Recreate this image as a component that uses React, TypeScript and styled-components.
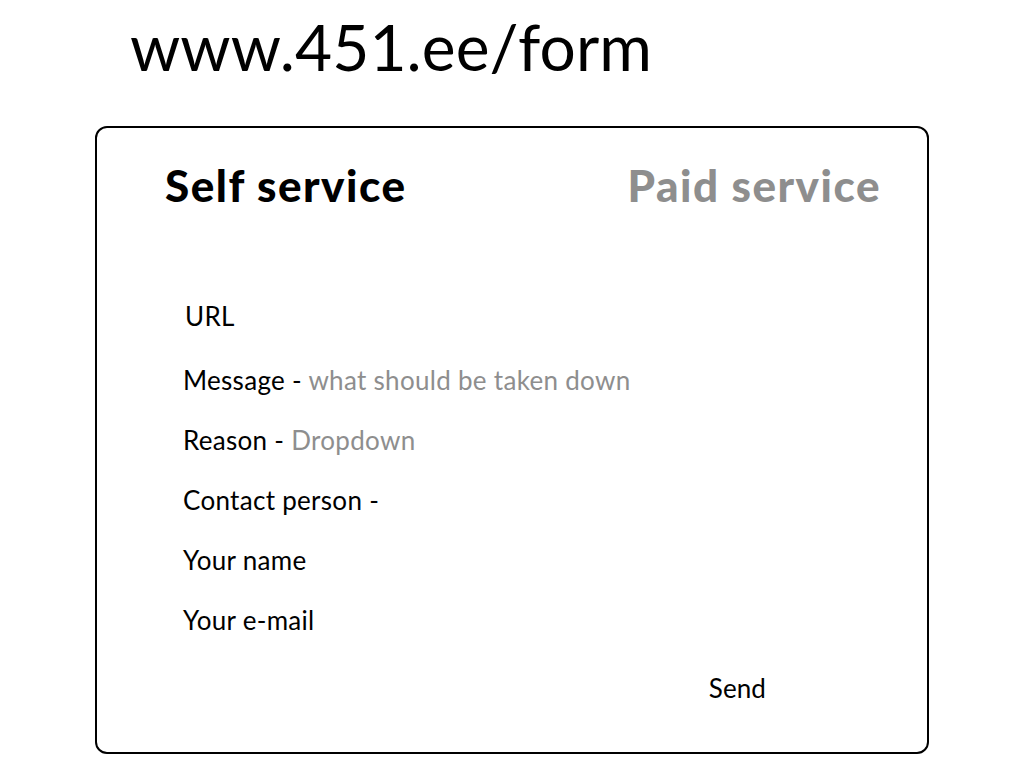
import React from "react";
import styled, { createGlobalStyle } from "styled-components";

const Global = createGlobalStyle`
  html, body { margin: 0; padding: 0; background: #fff; }
  body { font-family: Lato, "Open Sans", sans-serif; color: #000; }
`;

const Page = styled.div`
  width: 1024px;
  height: 768px;
  display: flex;
  flex-direction: column;
  box-sizing: border-box;
`;

const Title = styled.h1`
  margin: 0;
  padding: 7px 0 0 130px;
  height: 126px;
  flex-shrink: 0;
  box-sizing: border-box;
  font-family: Lato, sans-serif;
  font-weight: 400;
  font-size: 64px;
  line-height: 80px;
  letter-spacing: 0.1px;
`;

const Card = styled.section`
  margin-left: 95px;
  width: 834px;
  height: 628px;
  flex-shrink: 0;
  box-sizing: border-box;
  border: 2px solid #000;
  border-radius: 12px;
  display: flex;
  flex-direction: column;
`;

const Tabs = styled.div`
  display: flex;
  justify-content: space-between;
  align-items: baseline;
  padding: 33px 46px 0 68px;
  height: 172px;
  box-sizing: border-box;
`;

const Tab = styled.div<{ $active?: boolean }>`
  font-family: Lato, sans-serif;
  font-weight: 900;
  font-size: 44px;
  line-height: 48px;
  letter-spacing: 1.5px;
  color: ${(p) => (p.$active ? "#000" : "#8e8e8e")};
`;

const Form = styled.div`
  display: flex;
  flex-direction: column;
  padding-left: 86px;
`;

const Row = styled.div<{ $h: number; $indent?: number }>`
  height: ${(p) => p.$h}px;
  padding-left: ${(p) => p.$indent ?? 0}px;
  font-size: 26px;
  line-height: 32px;
  letter-spacing: 0.3px;
  color: #000;
`;

const Hint = styled.span`
  color: #8e8e8e;
`;

const Actions = styled.div`
  display: flex;
  justify-content: flex-end;
  padding-right: 161px;
  padding-top: 8px;
`;

const Send = styled.button`
  font-family: Lato, sans-serif;
  font-size: 26px;
  line-height: 32px;
  letter-spacing: 0.1px;
  background: none;
  border: none;
  padding: 0;
  color: #000;
`;

export default function App() {
  return (
    <>
      <Global />
      <Page>
        <Title>www.451.ee/form</Title>
        <Card>
          <Tabs>
            <Tab $active>Self service</Tab>
            <Tab>Paid service</Tab>
          </Tabs>
          <Form>
            <Row $h={64} $indent={2}>URL</Row>
            <Row $h={60}>
              Message - <Hint>what should be taken down</Hint>
            </Row>
            <Row $h={60}>
              Reason - <Hint>Dropdown</Hint>
            </Row>
            <Row $h={60}>Contact person -</Row>
            <Row $h={60}>Your name</Row>
            <Row $h={60}>Your e-mail</Row>
          </Form>
          <Actions>
            <Send>Send</Send>
          </Actions>
        </Card>
      </Page>
    </>
  );
}
